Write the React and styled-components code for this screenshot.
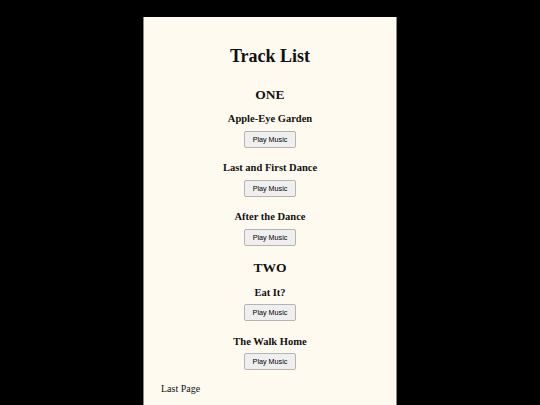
import React from 'react';
import styled, { createGlobalStyle } from 'styled-components';

const GlobalStyle = createGlobalStyle`
  html, body {
    margin: 0;
    padding: 0;
    background: #000;
  }
`;

const Page = styled.div`
  width: 254px;
  min-height: 388px;
  margin: 17px auto 0;
  box-sizing: border-box;
  background: #fffaf0;
  border-left: 1px solid #8a8a8a;
  border-right: 1px solid #8a8a8a;
  padding: 29px 17px 8px;
  display: flex;
  flex-direction: column;
  align-items: center;
  font-family: "Liberation Serif", "Times New Roman", serif;
  color: #111;
`;

const Title = styled.h1`
  margin: 0;
  font-size: 18px;
  line-height: 20px;
  font-weight: bold;
`;

const Album = styled.h2`
  margin: ${props => props.first ? '20.5px' : '14.5px'} 0 9.5px;
  font-size: 13.5px;
  line-height: 16px;
  font-weight: bold;
`;

const Track = styled.div`
  display: flex;
  flex-direction: column;
  align-items: center;
  gap: 5.5px;
  & + & {
    margin-top: 13.5px;
  }
`;

const TrackName = styled.h3`
  margin: 0;
  font-size: 10.5px;
  line-height: 13px;
  font-weight: bold;
`;

const PlayButton = styled.button`
  width: 52px;
  height: 17px;
  padding: 0;
  box-sizing: border-box;
  background: #efefef;
  border: 1px solid #b4b4b4;
  border-radius: 2px;
  font-family: "Liberation Sans", Arial, sans-serif;
  font-size: 7.2px;
  color: #000;
  cursor: pointer;
`;

const Footer = styled.p`
  align-self: flex-start;
  margin: 13px 0 0;
  font-size: 10px;
  line-height: 12px;
`;

const albums = [
  { name: 'ONE', tracks: ['Apple-Eye Garden', 'Last and First Dance', 'After the Dance'] },
  { name: 'TWO', tracks: ['Eat It?', 'The Walk Home'] },
];

const App = () => {
  return (
    <>
      <GlobalStyle />
      <Page>
        <Title>Track List</Title>
        {albums.map((album, i) => (
          <React.Fragment key={album.name}>
            <Album first={i === 0}>{album.name}</Album>
            <div>
              {album.tracks.map(track => (
                <Track key={track}>
                  <TrackName>{track}</TrackName>
                  <PlayButton>Play Music</PlayButton>
                </Track>
              ))}
            </div>
          </React.Fragment>
        ))}
        <Footer>Last Page</Footer>
      </Page>
    </>
  );
};

export default App;
